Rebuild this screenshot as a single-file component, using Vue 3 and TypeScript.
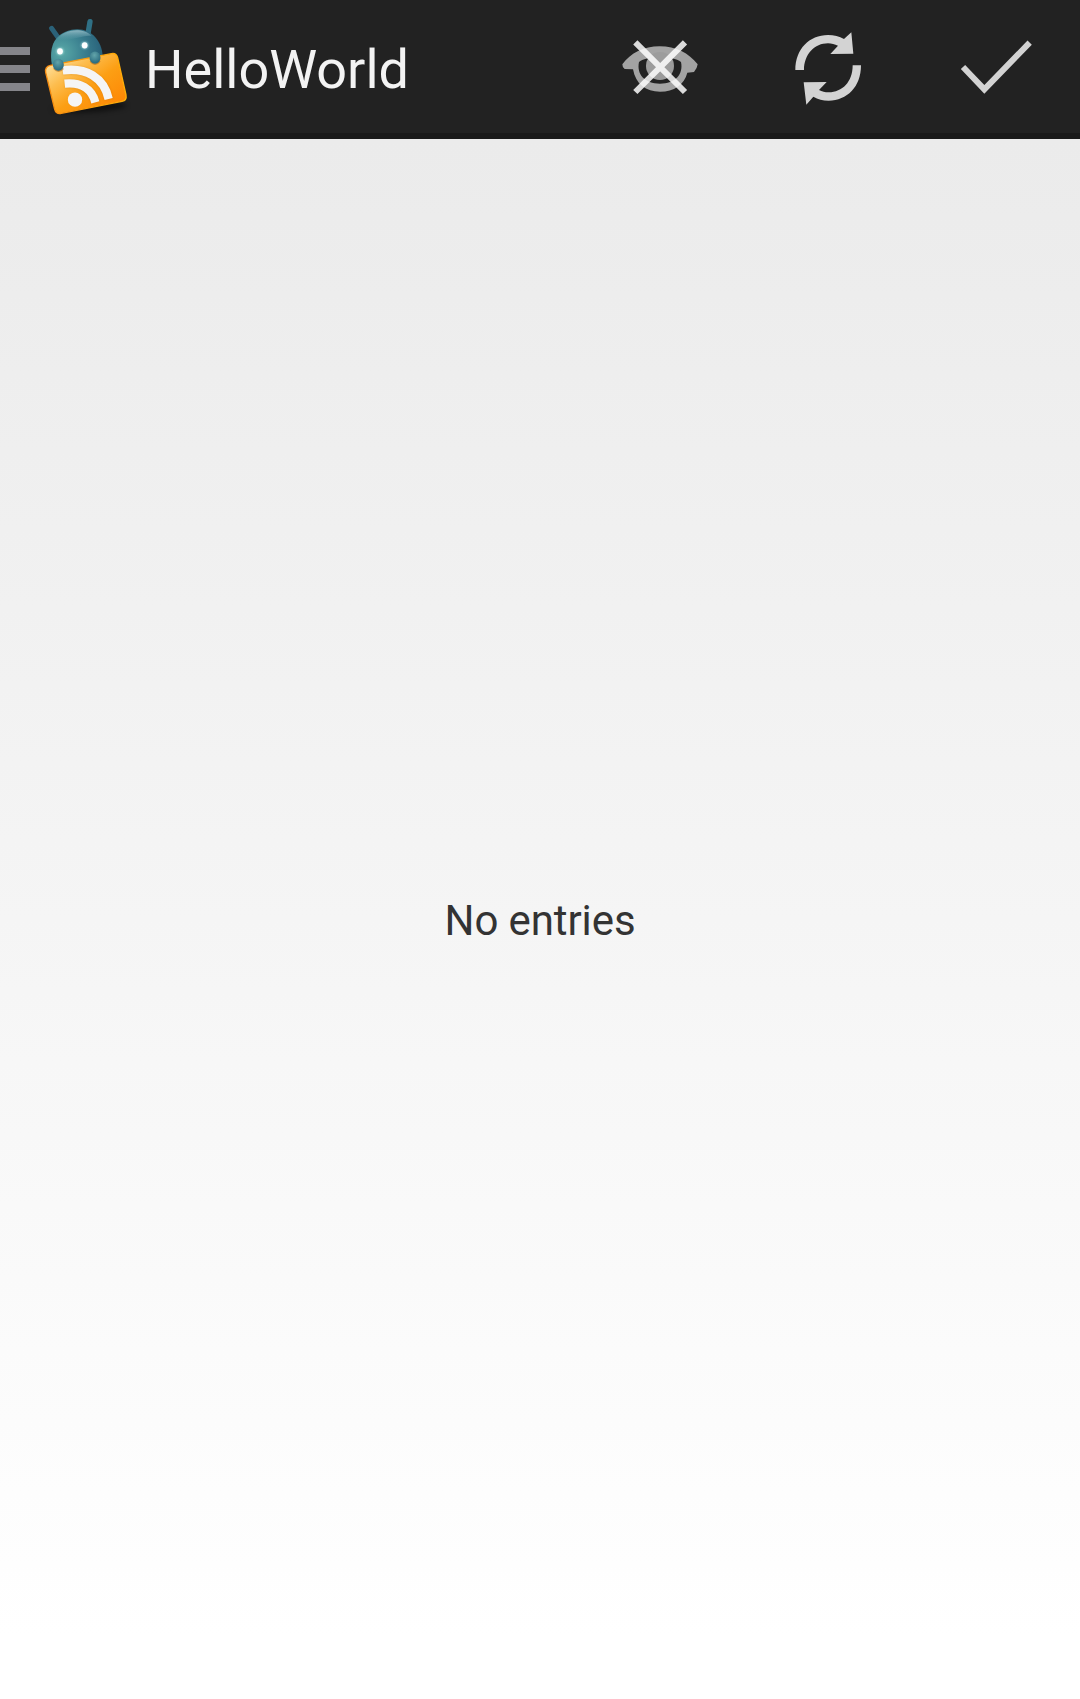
<script setup lang="ts">
const title: string = 'HelloWorld'
const emptyMessage: string = 'No entries'
</script>

<template>
  <div class="screen">
    <header class="bar">
      <div class="drawer"><i></i><i></i><i></i></div>
      <svg class="logo" viewBox="90 0 330 399" aria-hidden="true">
        <defs>
          <linearGradient id="card" x1="0" y1="0" x2="1" y2="1">
            <stop offset="0.05" stop-color="#ffe9ae" />
            <stop offset="0.32" stop-color="#fdbd4e" />
            <stop offset="0.55" stop-color="#fc9f14" />
            <stop offset="1" stop-color="#ff7f00" />
          </linearGradient>
          <linearGradient id="edge" x1="0" y1="0" x2="1" y2="0">
            <stop offset="0" stop-color="#f58a10" />
            <stop offset="1" stop-color="#ffae08" />
          </linearGradient>
          <radialGradient id="head" gradientUnits="userSpaceOnUse" cx="185" cy="158" r="125">
            <stop offset="0" stop-color="#5aaaa8" />
            <stop offset="0.5" stop-color="#3c8291" />
            <stop offset="1" stop-color="#286079" />
          </radialGradient>
          <linearGradient id="shine" x1="0" y1="0" x2="0" y2="1">
            <stop offset="0" stop-color="#a9cbd3" stop-opacity="0.75" />
            <stop offset="1" stop-color="#6aa5b0" stop-opacity="0" />
          </linearGradient>
          <radialGradient id="hand" cx="0.45" cy="0.3" r="0.7">
            <stop offset="0" stop-color="#62a4aa" />
            <stop offset="1" stop-color="#26677c" />
          </radialGradient>
          <filter id="soft" x="-30%" y="-60%" width="160%" height="220%"><feGaussianBlur stdDeviation="8" /></filter>
          <filter id="glow" x="-60%" y="-60%" width="220%" height="220%"><feGaussianBlur stdDeviation="3" /></filter>
        </defs>
        <ellipse cx="268" cy="322" rx="112" ry="15" fill="#000" opacity="0.5" filter="url(#soft)" transform="rotate(-3 268 322)" />
        <path d="M155 85L176 115" stroke="#2b6279" stroke-width="15" stroke-linecap="round" />
        <path d="M270 65L264 101" stroke="#2f7085" stroke-width="16" stroke-linecap="round" />
        <path d="M155 190C149 150 155 103 215 89C268 79 305 117 308 168L300 215H165Z" fill="url(#head)" />
        <path d="M171 119C184 93 244 77 275 108C250 103 204 128 171 119Z" fill="url(#shine)" />
        <g fill="#d8ffff" opacity="0.7" filter="url(#glow)"><circle cx="180" cy="154" r="10" /><circle cx="254" cy="136" r="10" /></g>
        <ellipse cx="180" cy="154" rx="8.5" ry="9.5" fill="#fff" />
        <ellipse cx="254" cy="136" rx="8.5" ry="9.500" fill="#fff" />
        <path d="M151 196L334 161Q349 158 353 173L378 285Q381 301 366 304L184 340Q168 343 164 328L137 217Q134 200 151 196Z" fill="url(#card)" stroke="url(#edge)" stroke-width="4" />
        <g opacity="0.3" filter="url(#glow)" fill="none" stroke="#b86000">
          <path d="M188 212C258 201 313 235 327 298M194 252C240 247 276 266 286 308" stroke-width="26" />
          <circle cx="225" cy="302" r="17" />
        </g>
        <path d="M188 211C258 201 312 233 326 297" fill="none" stroke="#f5f5f5" stroke-width="25" />
        <path d="M194 251C240 246 275 265 286 307" fill="none" stroke="#f5f5f5" stroke-width="25" />
        <circle cx="225" cy="299" r="21.5" fill="#f5f5f5" />
        <path d="M161 205Q175 222 190 205M271 184Q285 202 300 183" fill="none" stroke="#9b5814" stroke-width="5" opacity="0.5" />
        <ellipse cx="175" cy="194" rx="16.5" ry="18" fill="url(#hand)" />
        <ellipse cx="285" cy="173" rx="16.5" ry="18.5" fill="url(#hand)" />
      </svg>
      <h1 class="title">{{ title }}</h1>
      <nav class="actions">
        <button aria-label="Hide read">
          <svg viewBox="0 0 300 300">
            <path fill-rule="evenodd" fill="#a3a3a3" d="M37 133C62 99 101 79 149 79C198 79 236 99 263 133Q262 144 252 156L232 158C223 194 192 215 150 215C108 215 77 193 69 148L44 147Q37 143 37 133ZM87 126C79 163 104 191 150 191C196 191 221 163 213 126C200 116 176 112 150 112C124 112 100 116 87 126Z" />
            <circle cx="150" cy="138" r="42" fill="#9c9c9c" />
            <path d="M76 67L225 216M225 67L76 216" stroke="#fff" stroke-opacity="0.84" stroke-width="18" />
          </svg>
        </button>
        <button aria-label="Refresh">
          <svg viewBox="-6 0 300 300" fill="#d3d3d3">
            <path d="M46 150C46 87 88 45 144 45C162 45 178 49 192 57L214 37L220 101L151 102L174 77C164 73 155 70 144 70C104 70 72 103 72 150Z" />
            <path d="M243 136C243 201 201 242 146 242C128 242 114 238 100 230L79 254L71 187L140 186L117 210C126 215 135 217 146 217C187 217 218 186 218 136Z" />
          </svg>
        </button>
        <button aria-label="Mark all as read">
          <svg viewBox="3 0 300 300">
            <path d="M54 141L118 208L254 68" fill="none" stroke="#d3d3d3" stroke-width="18" />
          </svg>
        </button>
      </nav>
    </header>
    <main class="content"><p>{{ emptyMessage }}</p></main>
  </div>
</template>

<style>
body { margin: 0; }
</style>

<style scoped>
.screen {
  display: flex;
  flex-direction: column;
  width: 1080px;
  height: 1699px;
  font-family: Roboto, "Liberation Sans", sans-serif;
}
.bar {
  display: flex;
  align-items: center;
  flex: none;
  box-sizing: border-box;
  height: 139px;
  background: #222;
  border-bottom: 6px solid #1a1a1a;
}
.drawer {
  display: flex;
  flex-direction: column;
  gap: 10px;
  width: 30px;
  padding-top: 5px;
}
.drawer i { height: 8px; background: #85858a; }
.logo { display: block; width: 110px; height: 133px; }
.title {
  flex: 1;
  margin: 0 0 0 5px;
  padding-top: 7px;
  color: #f3f3f3;
  font-size: 54px;
  font-weight: 400;
  line-height: 64px;
}
.actions { display: flex; }
.actions button {
  display: flex;
  align-items: center;
  justify-content: center;
  width: 168px;
  height: 133px;
  padding: 0;
  border: 0;
  background: none;
}
.actions svg { width: 100px; height: 100px; margin-top: 7px; }
.content {
  display: flex;
  flex: 1;
  align-items: center;
  justify-content: center;
  background: linear-gradient(#ebebeb, #f5f5f5 50%, #fff 96%);
}
.content p {
  margin: 0;
  padding-top: 4px;
  color: #333;
  font-size: 42px;
  line-height: 50px;
  letter-spacing: -0.1px;
}
</style>
